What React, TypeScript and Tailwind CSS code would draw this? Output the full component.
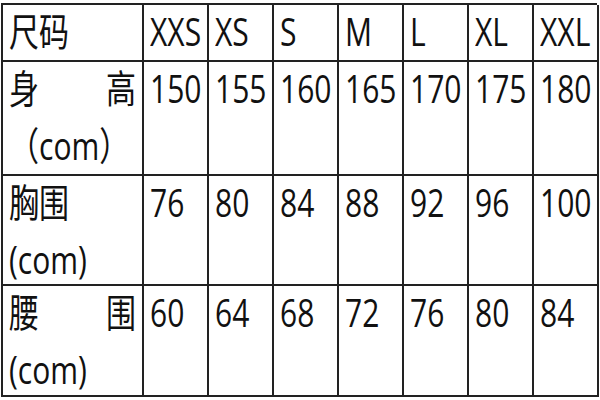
const sizes = ["XXS", "XS", "S", "M", "L", "XL", "XXL"];

const rows = [
  { values: ["150", "155", "160", "165", "170", "175", "180"], h: "h-[114px]" },
  { values: ["76", "80", "84", "88", "92", "96", "100"], h: "h-[110px]" },
  { values: ["60", "64", "68", "72", "76", "80", "84"], h: "h-[111px]" },
];

const font = "font-['Open_Sans','Noto_Sans_CJK_SC',sans-serif]";

function Squeeze({ children, right }: { children: React.ReactNode; right?: boolean }) {
  return (
    <span
      className={`inline-block whitespace-nowrap scale-x-[0.77] ${right ? "origin-right" : "origin-left"}`}
    >
      {children}
    </span>
  );
}

// one text line of the chart: 57px pitch, baseline about 41px from its top
function Line({ children, spread }: { children: React.ReactNode; spread?: boolean }) {
  return (
    <div className={`h-[57px] leading-[51px] ${spread ? "flex justify-between" : ""}`}>
      {children}
    </div>
  );
}

function Cell({ children, className = "" }: { children?: React.ReactNode; className?: string }) {
  return (
    <div className={`border-r-2 border-b-2 border-[#222] px-[6px] ${className}`}>{children}</div>
  );
}

function Label({ index }: { index: number }) {
  if (index === 0) {
    return (
      <>
        <Line spread>
          <Squeeze>身</Squeeze>
          <Squeeze right>高</Squeeze>
        </Line>
        <Line>
          <Squeeze>（com）</Squeeze>
        </Line>
      </>
    );
  }
  if (index === 1) {
    return (
      <>
        <Line>
          <Squeeze>胸围</Squeeze>
        </Line>
        <Line>
          <Squeeze>(com)</Squeeze>
        </Line>
      </>
    );
  }
  return (
    <>
      <Line spread>
        <Squeeze>腰</Squeeze>
        <Squeeze right>围</Squeeze>
      </Line>
      <Line>
        <Squeeze>(com)</Squeeze>
      </Line>
    </>
  );
}

export default function App() {
  return (
    <div className={`h-[400px] w-[600px] overflow-hidden bg-white text-[#111] ${font}`}>
      <div className="ml-[1px] mt-[3px] grid w-[596px] grid-cols-[141px_repeat(7,65px)] border-l-2 border-t-2 border-[#222] text-[39px]">
        <Cell className="h-[57px]">
          <Line>
            <Squeeze>尺码</Squeeze>
          </Line>
        </Cell>
        {sizes.map((s) => (
          <Cell key={s} className="h-[57px]">
            <Line>
              <Squeeze>{s}</Squeeze>
            </Line>
          </Cell>
        ))}
        {rows.map((row, i) => (
          <div key={i} className="contents">
            <Cell className={row.h}>
              <Label index={i} />
            </Cell>
            {row.values.map((v, j) => (
              <Cell key={j} className={row.h}>
                <Line>
                  <Squeeze>{v}</Squeeze>
                </Line>
              </Cell>
            ))}
          </div>
        ))}
      </div>
    </div>
  );
}
